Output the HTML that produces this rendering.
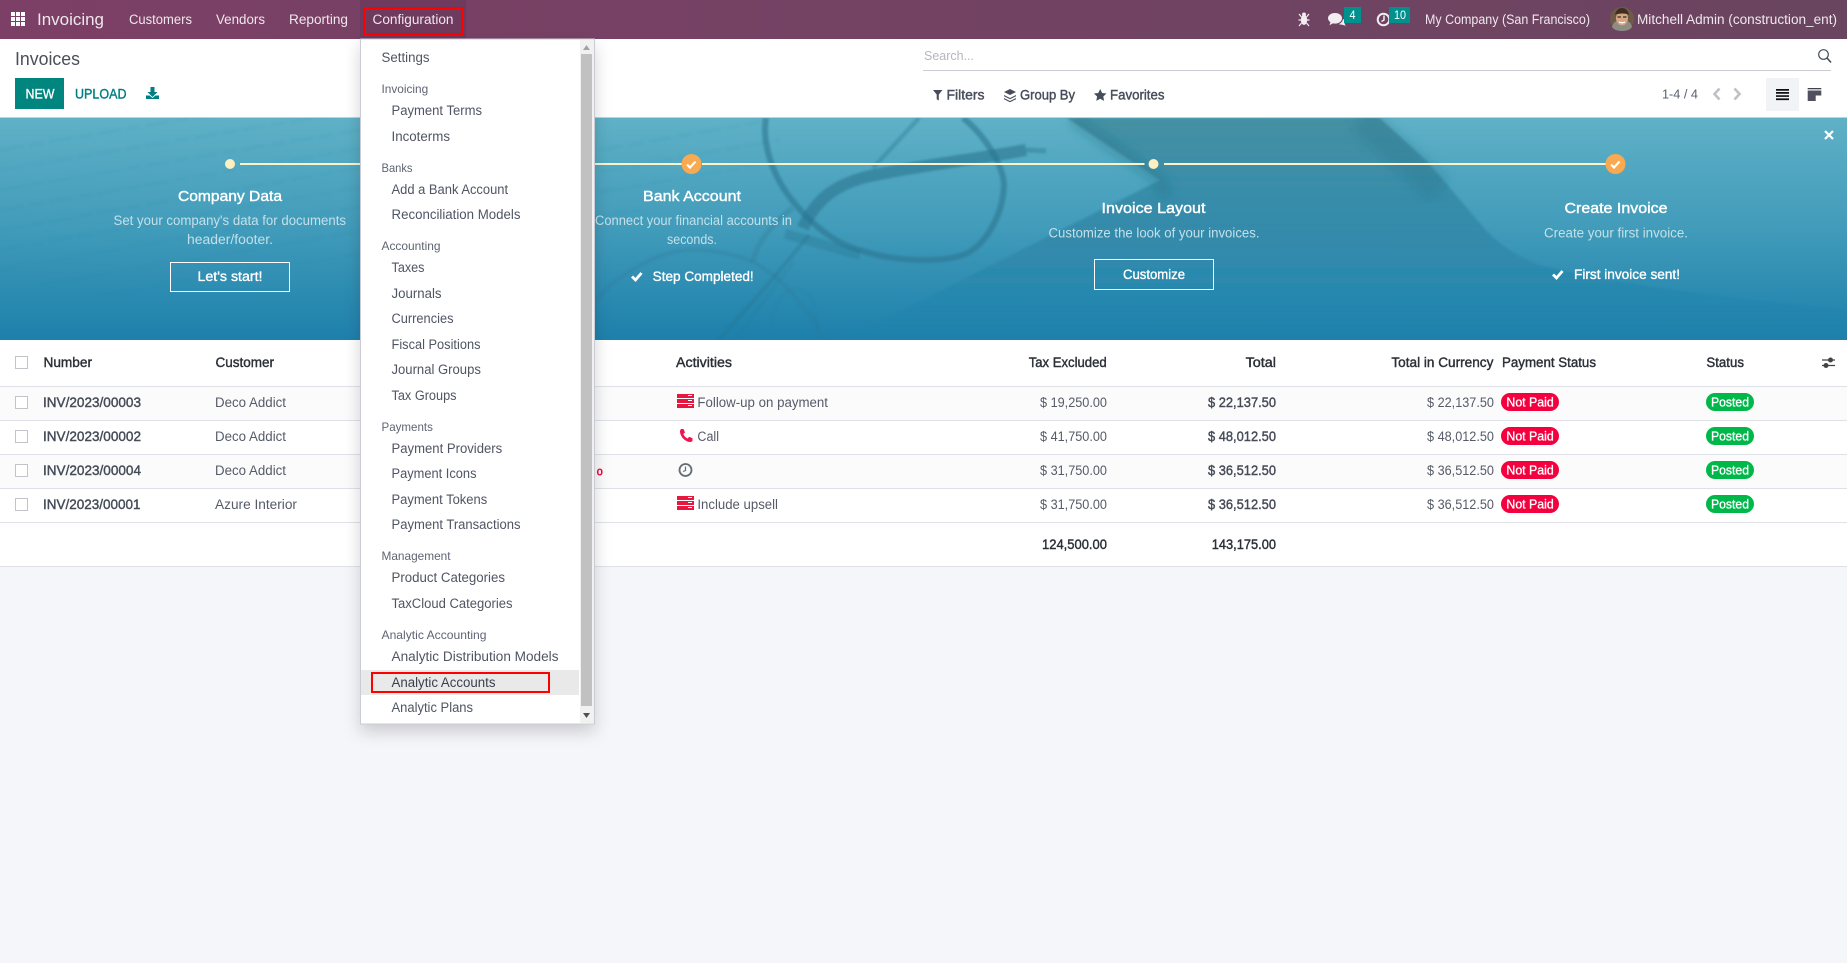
<!DOCTYPE html>
<html lang="en"><head><meta charset="utf-8"><title>Invoices - Configuration menu</title>
<style>
html,body{margin:0;padding:0;background:#f5f6fa;width:1847px;height:963px;overflow:hidden}
svg{display:block}
text{font-family:"Liberation Sans",sans-serif;font-size:13.5px;fill:#4f5563}
.nav{fill:#efe7ed;font-size:13.5px}
.mi{fill:#4f5563}
.mh{fill:#5f6473;font-size:12px}
.th{fill:#2b3038;stroke:#2b3038;stroke-width:.4px;font-size:13.5px}
.inv{fill:#454b57;stroke:#454b57;stroke-width:.4px;font-size:13.5px}
.td{fill:#565b68}
.b{fill:#454b57;stroke:#454b57;stroke-width:.4px;font-size:13.5px}
.cp{fill:#474d5a;stroke:#474d5a;stroke-width:.4px;font-size:13.5px}
.ttl{fill:#fff;stroke:#fff;stroke-width:.4px;font-size:15px}
.dsc{fill:#c3e0e8;font-size:13.5px}
.btn{fill:#fff;stroke:#fff;stroke-width:.35px;font-size:13.5px}
.bdg{fill:#fff;stroke:#fff;stroke-width:.3px;font-size:13px}
.sm{fill:#fff;font-size:11.5px}
.tot{fill:#2b3038;stroke:#2b3038;stroke-width:.4px;font-size:13.5px}
</style></head><body>
<svg xmlns="http://www.w3.org/2000/svg" width="1847" height="963" viewBox="0 0 1847 963">
<defs>
<linearGradient id="nv" x1="0" x2="1" y1="0" y2="0"><stop offset="0" stop-color="#7c3f66"/><stop offset="1" stop-color="#6a4560"/></linearGradient>
<linearGradient id="bn" x1="0" x2="0" y1="0" y2="1"><stop offset="0" stop-color="#5fb1c6"/><stop offset=".5" stop-color="#419bba"/><stop offset="1" stop-color="#1d80ab"/></linearGradient>
<linearGradient id="dk" gradientUnits="userSpaceOnUse" x1="0" x2="0" y1="118" y2="340"><stop offset="0" stop-color="#2a6f80" stop-opacity=".5"/><stop offset=".55" stop-color="#176a8e" stop-opacity=".32"/><stop offset="1" stop-color="#1d80ab" stop-opacity="0"/></linearGradient>
<filter id="bl" x="-10%" y="-10%" width="120%" height="120%"><feGaussianBlur stdDeviation="1"/></filter>
<filter id="bl3" x="-10%" y="-10%" width="120%" height="120%"><feGaussianBlur stdDeviation="1.5"/></filter>
<filter id="bl2" x="-20%" y="-20%" width="140%" height="140%"><feGaussianBlur stdDeviation="5"/></filter>
<filter id="sh" x="-20%" y="-10%" width="140%" height="120%"><feGaussianBlur stdDeviation="8"/></filter>
<clipPath id="bc"><rect x="0" y="118" width="1847" height="222"/></clipPath>
</defs>

<rect width="1847" height="963" fill="#f5f6fa"/>
<rect y="39" width="1847" height="527" fill="#fff"/>

<!-- navbar -->
<rect width="1847" height="39" fill="url(#nv)"/>
<rect x="360" width="106" height="39" fill="#6e3a5d"/>
<g fill="#fff">
<rect x="11" y="12" width="4" height="4"/><rect x="16" y="12" width="4" height="4"/><rect x="21" y="12" width="4" height="4"/>
<rect x="11" y="17" width="4" height="4"/><rect x="16" y="17" width="4" height="4"/><rect x="21" y="17" width="4" height="4"/>
<rect x="11" y="22" width="4" height="4"/><rect x="16" y="22" width="4" height="4"/><rect x="21" y="22" width="4" height="4"/>
</g>
<text class="nav" x="37" y="25" style="font-size:17px" textLength="67" lengthAdjust="spacingAndGlyphs">Invoicing</text>
<text class="nav" x="129" y="24" textLength="63" lengthAdjust="spacingAndGlyphs">Customers</text>
<text class="nav" x="216" y="24" textLength="49" lengthAdjust="spacingAndGlyphs">Vendors</text>
<text class="nav" x="289" y="24" textLength="59" lengthAdjust="spacingAndGlyphs">Reporting</text>
<text class="nav" x="372.5" y="24" textLength="81" lengthAdjust="spacingAndGlyphs">Configuration</text>
<rect x="364" y="8" width="98" height="26" fill="none" stroke="#f00" stroke-width="2"/>

<!-- bug -->
<g fill="#f3edf1" stroke="#f3edf1"><ellipse cx="1304" cy="20" rx="3.2" ry="5" stroke="none"/><circle cx="1304" cy="14.5" r="2" stroke="none"/><path d="M1299 14l2.5 3M1309 14l-2.5 3M1298.5 20h3M1309.5 20h-3M1299 26l2.5-3M1309 26l-2.5-3" fill="none" stroke-width="1.2"/></g>
<!-- chat -->
<path d="M1335 13c4.5 0 7 2.500 7 5.300s-2.600 5.300-7 5.300c-.8 0-1.500 0-2.200-.2l-3.300 1.900.9-3c-1.300-1-2.400-2.400-2.400-4 0-2.800 2.700-5.300 7-5.300z" fill="#f3edf1"/>
<path d="M1343 19l2.500 1.500-1 3 1.200 2.200-3.500-1-3.500-.5c2.500-1 4-3 4.300-5.200z" fill="#f3edf1"/>
<rect x="1344" y="7" width="17" height="16" fill="#00918f"/>
<text class="sm" x="1349.500" y="19" textLength="6" lengthAdjust="spacingAndGlyphs">4</text>
<!-- clock -->
<circle cx="1383.500" cy="19.500" r="5.800" fill="none" stroke="#f3edf1" stroke-width="2"/>
<path d="M1384 15.500v4.500l-2.500 1.500" fill="none" stroke="#f3edf1" stroke-width="1.500"/>
<rect x="1389" y="7" width="21" height="16" fill="#00918f"/>
<text class="sm" x="1394" y="19" textLength="12" lengthAdjust="spacingAndGlyphs">10</text>
<text class="nav" x="1425" y="24" textLength="165" lengthAdjust="spacingAndGlyphs">My Company (San Francisco)</text>
<!-- avatar -->
<circle cx="1622" cy="19" r="12" fill="#6f5a48"/>
<path d="M1612 27c1-5 5-7 10-7s9 2 10 7c-2 3-6 4-10 4s-8-1-10-4z" fill="#8d8d84"/>
<ellipse cx="1622" cy="18" rx="6" ry="7.500" fill="#d8a583"/>
<path d="M1615 15c1-5 4-7 7-7s6 2 7 7c-3-2-10-2-14 0z" fill="#3f2e24"/>
<path d="M1617.500 17h3.500M1623 17h3.500" stroke="#3a2a20" stroke-width="1.200"/>
<path d="M1619 22c1.500 1 4.500 1 6 0" stroke="#fff" stroke-width="1.200" fill="none"/>
<text class="nav" x="1637" y="24" textLength="200" lengthAdjust="spacingAndGlyphs">Mitchell Admin (construction_ent)</text>

<!-- control panel -->
<text x="15" y="65" style="font-size:18.500px;fill:#4a4f5a" textLength="65" lengthAdjust="spacingAndGlyphs">Invoices</text>
<rect x="15" y="78" width="49" height="31" fill="#00857f"/>
<text class="btn" x="25.500" y="98.500" textLength="29" lengthAdjust="spacingAndGlyphs">NEW</text>
<text x="75" y="98.500" style="stroke:#017e84;stroke-width:.4px;font-size:13.500px;fill:#017e84" textLength="51.500" lengthAdjust="spacingAndGlyphs">UPLOAD</text>
<path d="M150.500 87h4v5h3l-5 5-5-5h3z M146 95.500h3.500l3 2.500 3-2.500h3.500v3.500h-13z" fill="#017e84"/>

<text x="924" y="60" style="font-size:13px;fill:#b4b7bf" textLength="50" lengthAdjust="spacingAndGlyphs">Search...</text>
<rect x="923" y="70" width="908" height="1" fill="#ccccd4"/>
<circle cx="1823.500" cy="54.500" r="4.800" fill="none" stroke="#474d5a" stroke-width="1.200"/>
<path d="M1827 58l4 4.500" stroke="#474d5a" stroke-width="1.600"/>

<path d="M933 90h9.500l-3.700 4.500v6l-2.100-1.200v-4.800z" fill="#474d5a"/>
<text class="cp" x="946.500" y="99.500" textLength="38" lengthAdjust="spacingAndGlyphs">Filters</text>
<path d="M1010 89l6 3-6 3-6-3zM1004 95l6 3 6-3v1.300l-6 3-6-3zM1004 98l6 3 6-3v1.300l-6 3-6-3z" fill="#474d5a"/>
<text class="cp" x="1020" y="99.500" textLength="55" lengthAdjust="spacingAndGlyphs">Group By</text>
<path d="M1100.200 89l1.900 4 4.400.500-3.200 3 .8 4.400-3.900-2.200-3.900 2.200.8-4.400-3.200-3 4.400-.500z" fill="#474d5a"/>
<text class="cp" x="1110" y="99.500" textLength="54.500" lengthAdjust="spacingAndGlyphs">Favorites</text>

<text x="1662" y="98.500" style="fill:#5a6070;font-size:13px" textLength="36" lengthAdjust="spacingAndGlyphs">1-4 / 4</text>
<path d="M1719.500 88.500l-5 5.500 5 5.500M1734.500 88.500l5 5.500-5 5.500" fill="none" stroke="#bfc1c7" stroke-width="2.600"/>
<rect x="1766" y="78" width="33" height="33" fill="#f2f3f7"/>
<path d="M1776 89h13v1.700h-13zM1776 92h13v1.700h-13zM1776 95.200h13v1.700h-13zM1776 98.400h13v1.700h-13z" fill="#0d0d12"/>
<path d="M1807.700 88h13.600v1.300h-13.600z" fill="#3f434f"/>
<path d="M1807.700 90.500h8v10.500h-8zM1815.700 90.500h5.600v5h-5.600z" fill="#50505f"/>

<rect y="117" width="1847" height="1" fill="#c9ccd2"/>

<!-- banner -->
<rect y="118" width="1847" height="222" fill="url(#bn)"/>
<g clip-path="url(#bc)">
 <!-- faint document text -->
 <g stroke="#2d7d99" stroke-opacity=".13" stroke-width="2" stroke-dasharray="24 6 14 5" fill="none" filter="url(#bl3)">
  <path d="M0 150L300 100M0 170L360 110M0 190L420 120M0 210L470 130M0 230L520 140M0 250L570 150M0 270L600 165M40 285L610 190M100 295L640 210"/>
  <path d="M600 150L760 122M600 172L780 140M600 192L760 165"/>
 </g>
 <!-- dark surface right of the paper -->
 <path d="M1067 118H1380L1427 161L1473 215C1490 236 1505 252 1540 265C1640 290 1760 300 1847 310V340H800L863 330L1160 180Z" fill="url(#dk)" filter="url(#bl)"/>
 <path d="M1072 118L1160 180L1166 196" fill="none" stroke="#1f6d85" stroke-opacity=".35" stroke-width="12" filter="url(#bl2)"/>
 <path d="M1360 118L1440 190" fill="none" stroke="#1f6d85" stroke-opacity=".25" stroke-width="30" filter="url(#bl2)"/>
 <!-- glasses -->
 <g fill="none" stroke="#2a7692" filter="url(#bl)">
  <path d="M766 118C762 140 770 175 796 205C810 222 835 245 863 251C890 260 935 264 963 255C985 247 1003 215 1004 185C1003 165 985 135 963 118" stroke-width="6" stroke-opacity=".62"/>
  <path d="M803 228C815 200 835 185 866 177C910 167 970 160 1026 150" stroke-width="12" stroke-opacity=".62"/>
  <path d="M1026 150l20 1" stroke-width="5" stroke-opacity=".45"/>
  <path d="M785 234L860 255" stroke-width="10" stroke-opacity=".38"/>
  <path d="M596 301C610 280 650 256 679 251C700 248 740 252 763 268C780 278 805 305 823 335" stroke-width="4" stroke-opacity=".28"/>
  <path d="M753 262C755 245 775 220 793 208" stroke-width="5" stroke-opacity=".3"/>
  <path d="M919 118L873 168M809 235L776 275L719 340" stroke-width="4" stroke-opacity=".4"/>
  <path d="M793 262L735 340" stroke-width="3" stroke-opacity=".22"/>
  <path d="M770 336C772 310 775 300 790 290C810 285 815 300 818 335" stroke-width="2" stroke-opacity=".18"/>
 </g>
</g>
<!-- steps -->
<rect x="240" y="163" width="442" height="2" fill="#fcf3c9"/>
<rect x="702" y="163" width="442.500" height="2" fill="#fcf3c9"/>
<rect x="1164" y="163" width="442" height="2" fill="#fcf3c9"/>
<circle cx="230" cy="164" r="5" fill="#fcf0c3"/>
<circle cx="1153.500" cy="164" r="5" fill="#fcf0c3"/>
<circle cx="691.500" cy="164" r="10" fill="#f9a94f"/>
<circle cx="1615.500" cy="164" r="10" fill="#f9a94f"/>
<path d="M687 164.500l3 3 5.500-6" fill="none" stroke="#fff" stroke-width="2.200"/>
<path d="M1611 164.500l3 3 5.500-6" fill="none" stroke="#fff" stroke-width="2.200"/>

<text class="ttl" x="178" y="201" textLength="104" lengthAdjust="spacingAndGlyphs">Company Data</text>
<text class="dsc" x="113.500" y="225" textLength="232.500" lengthAdjust="spacingAndGlyphs">Set your company's data for documents</text>
<text class="dsc" x="187" y="244" textLength="86" lengthAdjust="spacingAndGlyphs">header/footer.</text>
<rect x="170.500" y="262.500" width="119" height="29" fill="none" stroke="#fff"/>
<text class="btn" x="197.500" y="281" textLength="65" lengthAdjust="spacingAndGlyphs">Let's start!</text>

<text class="ttl" x="643" y="201" textLength="98" lengthAdjust="spacingAndGlyphs">Bank Account</text>
<text class="dsc" x="595" y="225" textLength="197" lengthAdjust="spacingAndGlyphs">Connect your financial accounts in</text>
<text class="dsc" x="667" y="244" textLength="50" lengthAdjust="spacingAndGlyphs">seconds.</text>
<path d="M632 276.500l3.500 3.500 6-7" fill="none" stroke="#fff" stroke-width="2.800"/>
<text class="btn" x="652.700" y="281" textLength="101" lengthAdjust="spacingAndGlyphs">Step Completed!</text>

<text class="ttl" x="1101.500" y="213" textLength="104" lengthAdjust="spacingAndGlyphs">Invoice Layout</text>
<text class="dsc" x="1048.500" y="237.500" textLength="211" lengthAdjust="spacingAndGlyphs">Customize the look of your invoices.</text>
<rect x="1094.500" y="259.500" width="119" height="30" fill="none" stroke="#fff"/>
<text class="btn" x="1123" y="279" textLength="62" lengthAdjust="spacingAndGlyphs">Customize</text>

<text class="ttl" x="1564.500" y="213" textLength="103" lengthAdjust="spacingAndGlyphs">Create Invoice</text>
<text class="dsc" x="1544" y="237.500" textLength="144" lengthAdjust="spacingAndGlyphs">Create your first invoice.</text>
<path d="M1553 274.500l3.500 3.500 6-7" fill="none" stroke="#fff" stroke-width="2.800"/>
<text class="btn" x="1574" y="279" textLength="106" lengthAdjust="spacingAndGlyphs">First invoice sent!</text>
<path d="M1825 131l8 8M1833 131l-8 8" stroke="#fff" stroke-width="2.200"/>

<!-- table -->
<rect y="387" width="1847" height="33" fill="#fbfbfc"/>
<rect y="455" width="1847" height="33" fill="#fbfbfc"/>
<g fill="#e0e1e8">
<rect y="386" width="1847" height="1"/><rect y="420" width="1847" height="1"/><rect y="454" width="1847" height="1"/><rect y="488" width="1847" height="1"/><rect y="522" width="1847" height="1"/><rect y="566" width="1847" height="1"/>
</g>
<g fill="#fff" stroke="#c2c4ca">
<rect x="15.500" y="356.500" width="12" height="12"/>
<rect x="15.500" y="396.500" width="12" height="12"/>
<rect x="15.500" y="430.500" width="12" height="12"/>
<rect x="15.500" y="464.500" width="12" height="12"/>
<rect x="15.500" y="498.500" width="12" height="12"/>
</g>
<text class="th" x="43.500" y="367" textLength="48.500" lengthAdjust="spacingAndGlyphs">Number</text>
<text class="th" x="215.500" y="367" textLength="58.500" lengthAdjust="spacingAndGlyphs">Customer</text>
<text class="th" x="676" y="367" textLength="56" lengthAdjust="spacingAndGlyphs">Activities</text>
<text class="th" x="1028.700" y="367" textLength="78" lengthAdjust="spacingAndGlyphs">Tax Excluded</text>
<text class="th" x="1245.600" y="367" textLength="30.400" lengthAdjust="spacingAndGlyphs">Total</text>
<text class="th" x="1391.400" y="367" textLength="102" lengthAdjust="spacingAndGlyphs">Total in Currency</text>
<text class="th" x="1502" y="367" textLength="94" lengthAdjust="spacingAndGlyphs">Payment Status</text>
<text class="th" x="1706.400" y="367" textLength="37.600" lengthAdjust="spacingAndGlyphs">Status</text>
<path d="M1822 360h13M1822 365.500h13" stroke="#444" stroke-width="1.300"/><circle cx="1830.500" cy="360" r="2.500" fill="#444"/><circle cx="1826" cy="365.500" r="2.500" fill="#444"/>

<text class="inv" x="43" y="407" textLength="98" lengthAdjust="spacingAndGlyphs">INV/2023/00003</text>
<text class="inv" x="43" y="441" textLength="98" lengthAdjust="spacingAndGlyphs">INV/2023/00002</text>
<text class="inv" x="43" y="475" textLength="98" lengthAdjust="spacingAndGlyphs">INV/2023/00004</text>
<text class="inv" x="43" y="509" textLength="97.500" lengthAdjust="spacingAndGlyphs">INV/2023/00001</text>
<text class="td" x="215" y="407" textLength="71" lengthAdjust="spacingAndGlyphs">Deco Addict</text>
<text class="td" x="215" y="441" textLength="71" lengthAdjust="spacingAndGlyphs">Deco Addict</text>
<text class="td" x="215" y="475" textLength="71" lengthAdjust="spacingAndGlyphs">Deco Addict</text>
<text class="td" x="215" y="509" textLength="82" lengthAdjust="spacingAndGlyphs">Azure Interior</text>

<text x="596.500" y="475.500" style="fill:#f0043f;font-weight:700;font-size:12.500px" textLength="6.500" lengthAdjust="spacingAndGlyphs">o</text>

<!-- activity icons -->
<g fill="#e8173f">
<path d="M677 394h17v4h-17zM677 399h17v4h-17zM677 404h17v4h-17z"/>
<path d="M677 496h17v4h-17zM677 501h17v4h-17zM677 506h17v4h-17z"/>
</g>
<path d="M688 395.500h4M688 400.500h4M688 405.500h4M688 497.500h4M688 502.500h4M688 507.500h4" stroke="#fff" stroke-width="1"/>
<path d="M681 429l2.500 0 1.500 3.500-1.700 1.500c.8 2 2.400 3.700 4.300 4.500l1.600-1.700 3.300 1.500v2.700c-1 1-3 1.300-5 .5-4-1.500-7.500-6-7.500-10 0-1 .5-2 1-2.500z" fill="#f0144a"/>
<circle cx="685.500" cy="470" r="6" fill="none" stroke="#666b75" stroke-width="1.800"/>
<path d="M685.500 466.500v4l-2.500 1" fill="none" stroke="#666b75" stroke-width="1.200"/>
<text class="td" x="697.400" y="407" textLength="130.600" lengthAdjust="spacingAndGlyphs">Follow-up on payment</text>
<text class="td" x="697.400" y="441" textLength="21.600" lengthAdjust="spacingAndGlyphs">Call</text>
<text class="td" x="697.400" y="509" textLength="80.600" lengthAdjust="spacingAndGlyphs">Include upsell</text>

<!-- amounts -->
<text class="td" x="1040" y="407" textLength="67" lengthAdjust="spacingAndGlyphs">$ 19,250.00</text>
<text class="td" x="1040" y="441" textLength="67" lengthAdjust="spacingAndGlyphs">$ 41,750.00</text>
<text class="td" x="1040" y="475" textLength="67" lengthAdjust="spacingAndGlyphs">$ 31,750.00</text>
<text class="td" x="1040" y="509" textLength="67" lengthAdjust="spacingAndGlyphs">$ 31,750.00</text>
<text class="b" x="1208" y="407" textLength="68" lengthAdjust="spacingAndGlyphs">$ 22,137.50</text>
<text class="b" x="1208" y="441" textLength="68" lengthAdjust="spacingAndGlyphs">$ 48,012.50</text>
<text class="b" x="1208" y="475" textLength="68" lengthAdjust="spacingAndGlyphs">$ 36,512.50</text>
<text class="b" x="1208" y="509" textLength="68" lengthAdjust="spacingAndGlyphs">$ 36,512.50</text>
<text class="td" x="1427" y="407" textLength="67" lengthAdjust="spacingAndGlyphs">$ 22,137.50</text>
<text class="td" x="1427" y="441" textLength="67" lengthAdjust="spacingAndGlyphs">$ 48,012.50</text>
<text class="td" x="1427" y="475" textLength="67" lengthAdjust="spacingAndGlyphs">$ 36,512.50</text>
<text class="td" x="1427" y="509" textLength="67" lengthAdjust="spacingAndGlyphs">$ 36,512.50</text>
<text class="tot" x="1042" y="549" textLength="65" lengthAdjust="spacingAndGlyphs">124,500.00</text>
<text class="tot" x="1211.700" y="549" textLength="64.300" lengthAdjust="spacingAndGlyphs">143,175.00</text>

<!-- badges -->
<g fill="#f5003f">
<rect x="1501" y="393" width="58" height="18" rx="9"/><rect x="1501" y="427" width="58" height="18" rx="9"/><rect x="1501" y="461" width="58" height="18" rx="9"/><rect x="1501" y="495" width="58" height="18" rx="9"/>
</g>
<g fill="#00b84a">
<rect x="1706" y="393" width="48" height="18" rx="9"/><rect x="1706" y="427" width="48" height="18" rx="9"/><rect x="1706" y="461" width="48" height="18" rx="9"/><rect x="1706" y="495" width="48" height="18" rx="9"/>
</g>
<text class="bdg" x="1506.400" y="406.500" textLength="47.400" lengthAdjust="spacingAndGlyphs">Not Paid</text>
<text class="bdg" x="1506.400" y="440.500" textLength="47.400" lengthAdjust="spacingAndGlyphs">Not Paid</text>
<text class="bdg" x="1506.400" y="474.500" textLength="47.400" lengthAdjust="spacingAndGlyphs">Not Paid</text>
<text class="bdg" x="1506.400" y="508.500" textLength="47.400" lengthAdjust="spacingAndGlyphs">Not Paid</text>
<text class="bdg" x="1711" y="406.500" textLength="38" lengthAdjust="spacingAndGlyphs">Posted</text>
<text class="bdg" x="1711" y="440.500" textLength="38" lengthAdjust="spacingAndGlyphs">Posted</text>
<text class="bdg" x="1711" y="474.500" textLength="38" lengthAdjust="spacingAndGlyphs">Posted</text>
<text class="bdg" x="1711" y="508.500" textLength="38" lengthAdjust="spacingAndGlyphs">Posted</text>

<!-- dropdown -->
<rect x="360" y="46" width="235" height="686" fill="#000" fill-opacity=".17" filter="url(#sh)"/>
<rect x="360.500" y="39" width="234" height="685" fill="#fff" stroke="#c9ccd4"/>
<rect x="580" y="40" width="14" height="683" fill="#f1f1f1"/>
<rect x="581" y="54" width="11" height="652" fill="#c1c1c1"/>
<path d="M583 50l3.500-5 3.500 5z" fill="#a3a3a3"/>
<path d="M583 713h7l-3.500 5z" fill="#505050"/>
<rect x="361" y="670" width="218" height="25" fill="#e9e9e9"/>
<rect x="372" y="673" width="177" height="19" fill="none" stroke="#f00" stroke-width="2"/>

<text class="mi" x="381.500" y="62" textLength="48" lengthAdjust="spacingAndGlyphs">Settings</text>
<text class="mh" x="381.500" y="93" textLength="46.700" lengthAdjust="spacingAndGlyphs">Invoicing</text>
<text class="mi" x="391.500" y="115" textLength="90.500" lengthAdjust="spacingAndGlyphs">Payment Terms</text>
<text class="mi" x="391.500" y="141" textLength="58.500" lengthAdjust="spacingAndGlyphs">Incoterms</text>
<text class="mh" x="381.500" y="172" textLength="31" lengthAdjust="spacingAndGlyphs">Banks</text>
<text class="mi" x="391.500" y="194" textLength="116.600" lengthAdjust="spacingAndGlyphs">Add a Bank Account</text>
<text class="mi" x="391.500" y="219" textLength="129" lengthAdjust="spacingAndGlyphs">Reconciliation Models</text>
<text class="mh" x="381.500" y="250" textLength="59" lengthAdjust="spacingAndGlyphs">Accounting</text>
<text class="mi" x="391.500" y="272" textLength="33" lengthAdjust="spacingAndGlyphs">Taxes</text>
<text class="mi" x="391.500" y="298" textLength="50" lengthAdjust="spacingAndGlyphs">Journals</text>
<text class="mi" x="391.500" y="323" textLength="62" lengthAdjust="spacingAndGlyphs">Currencies</text>
<text class="mi" x="391.500" y="349" textLength="89" lengthAdjust="spacingAndGlyphs">Fiscal Positions</text>
<text class="mi" x="391.500" y="374" textLength="89.400" lengthAdjust="spacingAndGlyphs">Journal Groups</text>
<text class="mi" x="391.500" y="400" textLength="65" lengthAdjust="spacingAndGlyphs">Tax Groups</text>
<text class="mh" x="381.500" y="431" textLength="51.400" lengthAdjust="spacingAndGlyphs">Payments</text>
<text class="mi" x="391.500" y="453" textLength="110.700" lengthAdjust="spacingAndGlyphs">Payment Providers</text>
<text class="mi" x="391.500" y="478" textLength="85" lengthAdjust="spacingAndGlyphs">Payment Icons</text>
<text class="mi" x="391.500" y="504" textLength="95.700" lengthAdjust="spacingAndGlyphs">Payment Tokens</text>
<text class="mi" x="391.500" y="529" textLength="129" lengthAdjust="spacingAndGlyphs">Payment Transactions</text>
<text class="mh" x="381.500" y="560" textLength="69" lengthAdjust="spacingAndGlyphs">Management</text>
<text class="mi" x="391.500" y="582" textLength="113.500" lengthAdjust="spacingAndGlyphs">Product Categories</text>
<text class="mi" x="391.500" y="608" textLength="121" lengthAdjust="spacingAndGlyphs">TaxCloud Categories</text>
<text class="mh" x="381.500" y="639" textLength="105" lengthAdjust="spacingAndGlyphs">Analytic Accounting</text>
<text class="mi" x="391.500" y="661" textLength="167" lengthAdjust="spacingAndGlyphs">Analytic Distribution Models</text>
<text class="mi" x="391.500" y="687" style="fill:#3a3f4b" textLength="104" lengthAdjust="spacingAndGlyphs">Analytic Accounts</text>
<text class="mi" x="391.500" y="712" textLength="81.500" lengthAdjust="spacingAndGlyphs">Analytic Plans</text>
</svg>
</body></html>
